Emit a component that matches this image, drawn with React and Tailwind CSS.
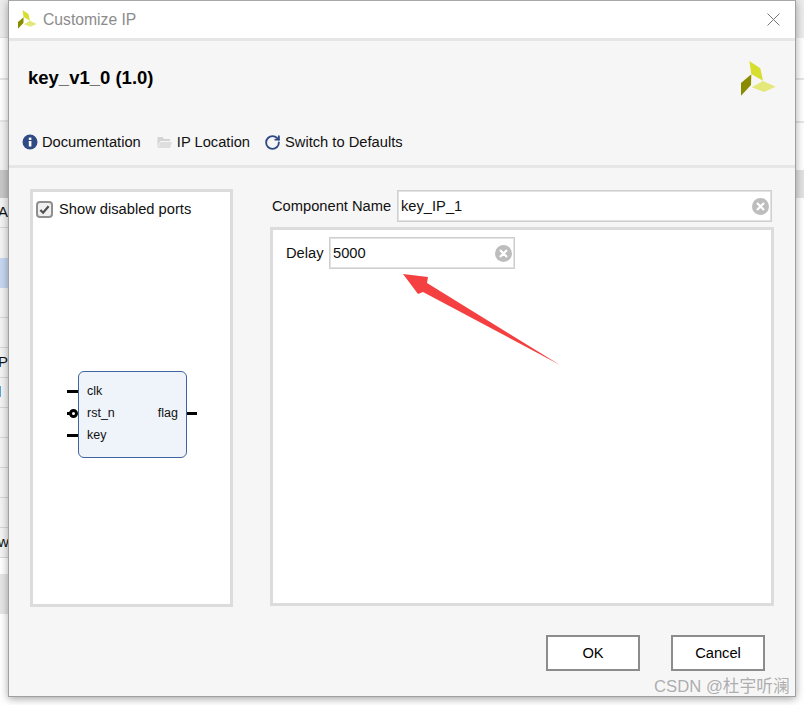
import { RotateCw } from "lucide-react";

const bgRows = [
  { h: "h-[38px]", cls: "bg-[#ececec] border-b border-[#e0e0e0]" },
  { h: "h-[42px]", cls: "bg-white border-b-2 border-[#e6e6e6]" },
  { h: "h-[42px]", cls: "bg-white border-b-2 border-[#e6e6e6]" },
  { h: "h-[48px]", cls: "bg-[#f4f4f4]" },
  { h: "h-[28px]", cls: "bg-[#c8c8c8]" },
  { h: "h-[30px]", cls: "bg-[#f4f4f4] border-b border-[#d8d8d8]", text: "A/" },
  { h: "h-[30px]", cls: "bg-[#f4f4f4]" },
  { h: "h-[30px]", cls: "bg-[#c6d8f2]" },
  { h: "h-[30px]", cls: "bg-[#f4f4f4] border-b border-[#d8d8d8]" },
  { h: "h-[30px]", cls: "bg-[#f4f4f4] border-b border-[#d8d8d8]" },
  { h: "h-[30px]", cls: "bg-[#f4f4f4] border-b border-[#d8d8d8]", text: "Pr" },
  { h: "h-[30px]", cls: "bg-[#f4f4f4] border-b border-[#d8d8d8]", text: "l" },
  { h: "h-[30px]", cls: "bg-[#f4f4f4] border-b border-[#d8d8d8]" },
  { h: "h-[30px]", cls: "bg-[#f4f4f4] border-b border-[#d8d8d8]" },
  { h: "h-[30px]", cls: "bg-[#f4f4f4] border-b border-[#d8d8d8]" },
  { h: "h-[30px]", cls: "bg-[#f4f4f4] border-b border-[#d8d8d8]" },
  { h: "h-[30px]", cls: "bg-[#f4f4f4] border-b border-[#d8d8d8]", text: "w" },
  { h: "h-[16px]", cls: "bg-white" },
  { h: "h-[40px]", cls: "bg-[#e6e6e6]" },
  { h: "h-[90px]", cls: "bg-white" },
];

function Logo({ className }) {
  return (
    <svg viewBox="0 0 35 35" className={className}>
      <polygon points="8.3,0 19.3,7.3 22,19.7 10.3,13" fill="#d6de2e" />
      <polygon points="10.3,13.3 10,24 0,34.7 0,22" fill="#8a8c00" />
      <polygon points="22,20 34.7,25.7 23,31 10.7,26.3" fill="#e4e87a" />
    </svg>
  );
}

function ClearIcon() {
  return (
    <svg viewBox="0 0 17 17" className="w-[17px] h-[17px] shrink-0">
      <circle cx="8.5" cy="8.5" r="8.5" fill="#bdbdbd" />
      <path d="M5 5l7 7M12 5l-7 7" stroke="#fff" strokeWidth="2.2" />
    </svg>
  );
}

function TextBox({ value, className }) {
  return (
    <div className={`flex items-center justify-between bg-white border border-[#cfcfcf] shadow-[inset_0_0_0_1px_#e2e2e2] pl-[3px] pr-[2px] ${className}`}>
      <span>{value}</span>
      <ClearIcon />
    </div>
  );
}

function IpBlock() {
  return (
    <div className="relative w-[109px] h-[87px] ml-[45px] mt-[152px] bg-[#eff3fa] border border-[#3f62a0] rounded-[6px] text-[12.5px] text-[#111] pt-[8px] pl-[8px] pr-[8px] leading-[22px]">
      <div>clk</div>
      <div className="flex justify-between">
        <span>rst_n</span>
        <span>flag</span>
      </div>
      <div>key</div>
      <div className="absolute left-[-12px] top-[18px] w-[11px] h-[3px] bg-black" />
      <div className="absolute left-[-10px] top-[37px] w-[9px] h-[9px] rounded-full border-[3px] border-black bg-white" />
      <div className="absolute left-[-12px] top-[40px] w-[3px] h-[3px] bg-black" />
      <div className="absolute left-[-12px] top-[62px] w-[11px] h-[3px] bg-black" />
      <div className="absolute right-[-11px] top-[40px] w-[10px] h-[3px] bg-black" />
    </div>
  );
}

export default function App() {
  return (
    <div className="relative w-[804px] h-[705px] overflow-hidden bg-white flex font-['Liberation_Sans',Arial,sans-serif] text-[14.7px] text-[#111]">
      <div className="w-2 shrink-0 overflow-hidden text-[15px] leading-[28px]">
        {bgRows.map((row, i) => (
          <div key={i} className={`${row.h} ${row.cls} whitespace-nowrap indent-[-2px]`}>
            {row.text}
          </div>
        ))}
      </div>

      <div className="relative z-10 w-[788px] h-[697px] shrink-0 flex flex-col bg-[#f6f6f6] border border-t-[#a8a8a8] border-x-[#a0a0a0] border-b-[#a0a0a0] shadow-[0_2px_8px_rgba(0,0,0,0.35)]">
        <div className="h-[40px] shrink-0 flex items-center bg-white border-b-[3px] border-[#e6e6e6] pl-[9px] pr-[15px]">
          <Logo className="w-[19px] h-[19px]" />
          <span className="ml-[6px] text-[15.7px] text-[#8c8c8c]">Customize IP</span>
          <svg viewBox="0 0 13 13" className="ml-auto w-[13px] h-[13px]">
            <path d="M0.5 0.5l12 12M12.5 0.5l-12 12" stroke="#777" strokeWidth="1" fill="none" />
          </svg>
        </div>

        <div className="h-[127px] shrink-0 relative border-b-[3px] border-[#e6e6e6] px-[19px]">
          <div className="pt-[25px] font-bold text-[18.5px] leading-[24px] text-black">key_v1_0 (1.0)</div>
          <Logo className="absolute right-[19px] top-[20px] w-[35px] h-[35px]" />
          <div className="flex items-center mt-[42px] leading-[20px] -ml-[6px]">
            <svg viewBox="0 0 16 16" className="w-[16px] h-[16px]">
              <circle cx="8" cy="8" r="7.5" fill="#2f4a85" />
              <rect x="6.8" y="7" width="2.6" height="5.5" fill="#fff" />
              <rect x="6.8" y="3.6" width="2.6" height="2.4" fill="#fff" />
            </svg>
            <span className="ml-[4px]">Documentation</span>
            <svg viewBox="0 0 15 14" className="ml-[16px] w-[15px] h-[14px]">
              <path d="M0.5 2h5l1.5 2h6v2H3L0.5 13z" fill="#d4d4d4" />
              <path d="M3.5 7H15l-2 6H1z" fill="#dedede" />
            </svg>
            <span className="ml-[5px]">IP Location</span>
            <RotateCw size={17} strokeWidth={2.6} color="#2f4a85" className="ml-[14px]" />
            <span className="ml-[4px]">Switch to Defaults</span>
          </div>
        </div>

        <div className="flex flex-1 pl-[21px] pr-[21px] pt-[21px]">
          <div className="w-[203px] h-[418px] shrink-0 border-[3px] border-[#dcdcdc] bg-white">
            <div className="flex items-center h-[20px] pl-[3px] mt-[7px]">
              <div className="w-[17px] h-[17px] flex items-center justify-center rounded-[4px] border-2 border-[#8f8f8f] bg-[#f0f0f0]">
                <svg viewBox="0 0 12 12" className="w-[11px] h-[11px]">
                  <path d="M1.5 6.5l3 3 6-7" stroke="#505050" strokeWidth="2.4" fill="none" />
                </svg>
              </div>
              <span className="ml-[6px]">Show disabled ports</span>
            </div>
            <IpBlock />
          </div>

          <div className="ml-[37px] flex-1 flex flex-col">
            <div className="flex items-center h-[32px] ml-[2px] mt-[1px]">
              <span className="w-[125px] shrink-0">Component Name</span>
              <TextBox value="key_IP_1" className="w-[375px] h-[32px]" />
            </div>
            <div className="mt-[5px] w-[504px] h-[379px] border-[3px] border-[#dcdcdc] bg-white pt-[6px] pl-[13px] flex items-start">
              <div className="flex items-center h-[33px] pt-[1px]">
                <span className="w-[43px]">Delay</span>
                <TextBox value="5000" className="w-[186px] h-[32px]" />
              </div>
            </div>
          </div>
        </div>

        <div className="absolute left-[537px] top-[634px] flex gap-[31px]">
          <button className="w-[94px] h-[36px] bg-white border-2 border-[#8c8c8c] text-black">OK</button>
          <button className="w-[94px] h-[36px] bg-white border-2 border-[#8c8c8c] text-black">Cancel</button>
        </div>
      </div>

      <div className="w-[8px] shrink-0 overflow-hidden">
        <div className="h-[38px] bg-[#ececec]" />
        <div className="h-[42px] border-b-2 border-[#e6e6e6]" />
        <div className="h-[43px] border-b-2 border-[#e6e6e6]" />
        <div className="h-[47px]" />
        <div className="h-[28px] bg-[#e2e2e2]" />
      </div>

      <svg viewBox="0 0 804 705" className="absolute inset-0 z-20 w-[804px] h-[705px] pointer-events-none">
        <polygon points="403,274 428,277 427,283 560,365 423,292 418,294" fill="#f44040" />
      </svg>

      <div className="absolute z-20 left-[654px] top-[678px] text-[16.7px] leading-[18px] whitespace-nowrap text-[#9a9a9a]/80 font-['Liberation_Sans','Noto_Sans_CJK_SC',sans-serif]">
        CSDN @杜宇听澜
      </div>
    </div>
  );
}
